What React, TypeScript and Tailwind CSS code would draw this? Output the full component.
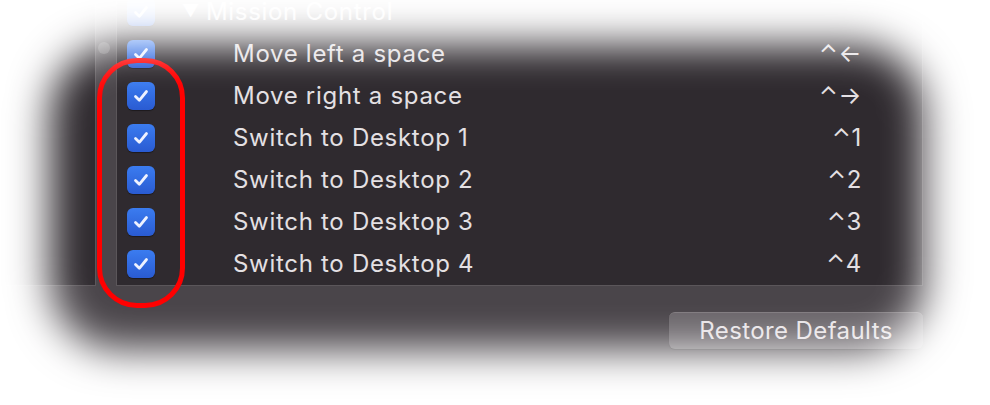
import React from "react";

const rows = [
  { name: "Move left a space", keys: "⌃←" },
  { name: "Move right a space", keys: "⌃→" },
  { name: "Switch to Desktop 1", keys: "⌃1" },
  { name: "Switch to Desktop 2", keys: "⌃2" },
  { name: "Switch to Desktop 3", keys: "⌃3" },
  { name: "Switch to Desktop 4", keys: "⌃4" },
];

const Checkbox = () => (
  <div className="flex h-[28px] w-[28px] shrink-0 items-center justify-center rounded-[6px] bg-gradient-to-b from-[#3b7cf0] to-[#2a5bd2] shadow-[0_1px_1px_rgba(0,0,0,0.4)]">
    <svg width="18" height="18" viewBox="0 0 18 18" fill="none">
      <path d="M3.5 9.5l3.8 3.8L14.5 4.5" stroke="#eef2ff" strokeWidth="2.8" strokeLinecap="round" strokeLinejoin="round" />
    </svg>
  </div>
);

const App = () => {
  return (
    <div
      className="relative h-[405px] w-[990px] overflow-hidden bg-[#4a454a] text-[24px] tracking-[0.7px] text-[#e4e0e3]"
      style={{ fontFamily: "Inter, 'DejaVu Sans', sans-serif" }}
    >
      <div className="flex h-[286px]">
        {/* category list */}
        <div className="w-[96px] shrink-0 border-r border-b border-[#5b565a] bg-[#2f2a2f]" />
        {/* gap with scroller knob */}
        <div className="w-[20px] shrink-0 pt-[42px] pl-[2px]">
          <div className="h-[12px] w-[12px] rounded-full bg-[#6a666a]" />
        </div>
        {/* shortcut table */}
        <div className="-mt-[9px] flex w-[807px] shrink-0 flex-col border-x border-b border-[#5b565a] bg-[#2f2a2f]">
          <div className="flex h-[42px] items-center">
            <div className="ml-[10px]">
              <Checkbox />
            </div>
            <span className="ml-[27px] text-[17px]">▼</span>
            <span className="ml-[6px]">Mission Control</span>
          </div>
          {rows.map((row) => (
            <div key={row.name} className="flex h-[42px] items-center">
              <div className="ml-[10px]">
                <Checkbox />
              </div>
              <span className="ml-[78px] flex-1">{row.name}</span>
              <span className="mr-[60px] text-right">{row.keys}</span>
            </div>
          ))}
        </div>
      </div>

      <div className="flex justify-end pr-[67px] pt-[26px]">
        <button className="flex h-[37px] w-[254px] items-center justify-center rounded-[6px] border-t border-[#807b7f] bg-[#6b666b] text-[24px] tracking-[0.4px] text-[#e8e4e7] shadow-[0_1px_1px_rgba(0,0,0,0.25)]">
          Restore Defaults
        </button>
      </div>

      {/* red annotation */}
      <div className="pointer-events-none absolute left-[97px] top-[58px] h-[250px] w-[88px] rounded-[40px] border-[5px] border-[#ff0000]" />

      {/* white vignette */}
      <div className="pointer-events-none absolute inset-0 overflow-hidden">
        <div className="absolute -left-[250px] -top-[255px] -right-[235px] -bottom-[245px] rounded-[370px] border-[300px] border-white blur-[20px]" />
      </div>
    </div>
  );
};

export default App;
